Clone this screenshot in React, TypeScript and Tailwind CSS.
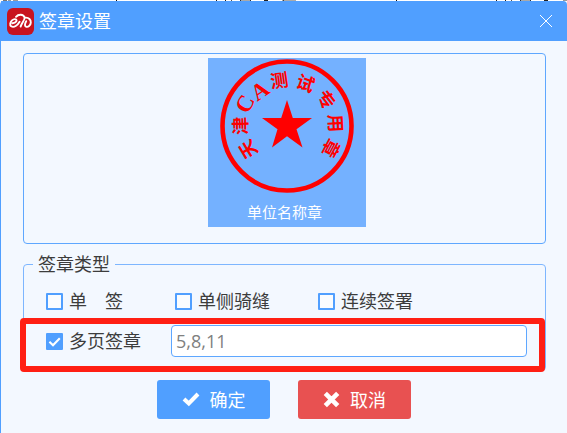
import { useState } from "react";

const sealGlyphs = [
  { text: "天", x: 27, y: 92, angle: -121 },
  { text: "津", x: 19, y: 68, angle: -91 },
  { text: "C", x: 25, y: 46, angle: -62 },
  { text: "A", x: 40, y: 33, angle: -34 },
  { text: "测", x: 59, y: 21, angle: -8 },
  { text: "试", x: 86, y: 24, angle: 20 },
  { text: "专", x: 107, y: 41, angle: 52 },
  { text: "用", x: 117, y: 65, angle: 87 },
  { text: "章", x: 112, y: 91, angle: 118 },
];

function Seal() {
  return (
    <svg width="134" height="136" viewBox="0 0 134 136" role="img" aria-label="印章">
      <circle cx="67" cy="68" r="64.5" fill="none" stroke="#ff0000" strokeWidth="4.6" />
      <path
        d="M67 42 L72.8 60 H92 L76.5 71.2 L82.5 89.5 L67 78.2 L52 89.5 L57.5 71.2 L42 60 H61.2 Z"
        fill="#ff0000"
      />
      {sealGlyphs.map((g) => (
        <text
          key={g.text}
          x={g.x}
          y={g.y}
          transform={`rotate(${g.angle} ${g.x} ${g.y})`}
          textAnchor="middle"
          dominantBaseline="central"
          fill="#ff0000"
          className={
            /[A-Z]/.test(g.text)
              ? "font-['Liberation_Serif',serif] text-[23px] font-bold"
              : "font-['Noto_Sans_CJK_SC',sans-serif] text-[18px] font-bold"
          }
        >
          {g.text}
        </text>
      ))}
    </svg>
  );
}

function Logo() {
  return (
    <svg width="27" height="27" viewBox="0 0 27 27" aria-hidden="true">
      <rect width="27" height="27" rx="6" fill="#c8131f" />
      <g fill="none" stroke="#fff" strokeWidth="1.9" strokeLinecap="round" strokeLinejoin="round">
        <path d="M5.4 15.2 C7.8 15 9.8 13.6 9.6 12.2 C9.2 10.6 6.8 10.8 5 12.4 C3 14.4 2.6 17 4.2 18.3 C7 20 10.6 17.4 12.6 13.8" />
        <path d="M9 8.8 C11.4 6 16.4 6 17.6 9.4 C18.2 11.6 15 14.6 13.6 18.6" />
        <path d="M18.6 9.6 C21.8 9.4 24 11.8 23.8 14.6 C23.6 17.6 21 19.6 19 18.6 C17.2 17.6 18 15.4 19.2 13.2" />
      </g>
    </svg>
  );
}

/* Sliver of the document that stays visible above the dialog. */
const fragments = [
  [3, 4, "#777"], [8, 3, "#999"], [13, 5, "#999"], [116, 1, "#111"],
  [216, 1, "#222"], [225, 1, "#222"], [231, 1, "#555"], [240, 11, "#aaa"],
  [240, 1, "#333"], [250, 1, "#333"], [264, 4, "#222"], [282, 14, "#aaa"],
  [283, 1, "#444"], [396, 1, "#111"], [496, 1, "#222"], [505, 1, "#222"],
  [511, 1, "#555"], [520, 11, "#aaa"], [520, 1, "#333"], [530, 1, "#333"],
  [544, 4, "#222"], [563, 4, "#999"],
] as const;

function CheckOption({ label, initial = false }: { label: string; initial?: boolean }) {
  const [checked, setChecked] = useState(initial);
  return (
    <label className="flex items-center gap-[6px] whitespace-pre">
      <span className="relative flex">
        <input
          type="checkbox"
          checked={checked}
          onChange={(e) => setChecked(e.target.checked)}
          className="size-[17px] appearance-none rounded-[1px] border-2 border-[#509fff] bg-white/50 checked:bg-[#509fff]"
        />
        {checked && (
          <svg className="pointer-events-none absolute inset-0" width="17" height="17" viewBox="0 0 17 17" aria-hidden="true">
            <path d="M3.4 8.8 L7 12.3 L13.8 5.2" fill="none" stroke="#fff" strokeWidth="2.1" />
          </svg>
        )}
      </span>
      {label}
    </label>
  );
}

export default function App() {
  return (
    <div className="min-h-screen w-full bg-white font-['Open_Sans','Noto_Sans_CJK_SC',sans-serif] text-[18px] leading-6 text-[#3c3c3c]">
      <svg className="block h-px w-full" height="1" aria-hidden="true">
        {fragments.map(([x, w, fill], i) => (
          <rect key={i} x={x} y="0" width={w} height="1" fill={fill} />
        ))}
      </svg>
      <div className="flex min-h-[calc(100vh-1px)] flex-col rounded-t-[4px] border-l border-[#509fff] bg-[#f3f8ff]">
        <header className="flex h-10 items-center justify-between rounded-tr-[4px] bg-[#509fff] pr-[14px] pl-[6px] text-white">
          <div className="flex items-center gap-[5px]">
            <Logo />
            <h1>签章设置</h1>
          </div>
          <button type="button" aria-label="关闭">
            <svg width="14" height="14" viewBox="0 0 14 14" className="block">
              <path d="M1 1 L13 13 M13 1 L1 13" stroke="#fff" strokeWidth="1" />
            </svg>
          </button>
        </header>

        <main className="flex flex-col pt-3 pr-[21px] pl-[22px]">
          <section className="flex h-[191px] justify-center rounded-[4px] border border-[#5ea7ff] pt-1 pl-1">
            <figure className="flex h-[169px] w-[158px] flex-col items-center gap-2 bg-[#74b1ff]">
              <Seal />
              <figcaption className="pr-1 text-[15px] leading-5 text-white">单位名称章</figcaption>
            </figure>
          </section>

          <fieldset className="mt-2 min-w-0 rounded-[4px] border border-[#7db6ff] pr-[18px] pb-[13px] pl-[22px]">
            <legend className="-ml-[13px] px-[5px]">签章类型</legend>
            <div className="grid grid-cols-[129px_143px_auto] pt-[13px]">
              <CheckOption label="单　签" />
              <CheckOption label="单侧骑缝" />
              <CheckOption label="连续签署" />
            </div>
            <div className="relative mt-3 flex items-center gap-[30px]">
              <CheckOption label="多页签章" initial />
              <input
                type="text"
                defaultValue="5,8,11"
                aria-label="页码"
                className="h-8 min-w-0 flex-1 rounded-[4px] border border-[#5ea7ff] bg-white px-1 text-[#808080] outline-none"
              />
              <div className="pointer-events-none absolute -top-[7px] -right-[18px] -bottom-[15px] -left-[26px] rounded-[4px] border-[6px] border-[#ff1f14]" />
            </div>
          </fieldset>

          <div className="mt-[9px] flex justify-center gap-7 pr-px">
            <button type="button" className="flex h-[39px] w-[113px] items-center justify-center gap-[10px] rounded-[3px] bg-[#509fff] text-white">
              <svg width="18" height="15" viewBox="0 0 18 15" aria-hidden="true">
                <path d="M2 7 L6.8 11.5 L16 2" fill="none" stroke="#fff" strokeWidth="4" />
              </svg>
              确定
            </button>
            <button type="button" className="flex h-[39px] w-[113px] items-center justify-center gap-[10px] rounded-[3px] bg-[#e85151] text-white">
              <svg width="17" height="17" viewBox="0 0 17 17" aria-hidden="true">
                <path d="M2.3 2.3 L14.7 14.7 M14.7 2.3 L2.3 14.7" stroke="#fff" strokeWidth="4.6" />
              </svg>
              取消
            </button>
          </div>
        </main>
      </div>
    </div>
  );
}
